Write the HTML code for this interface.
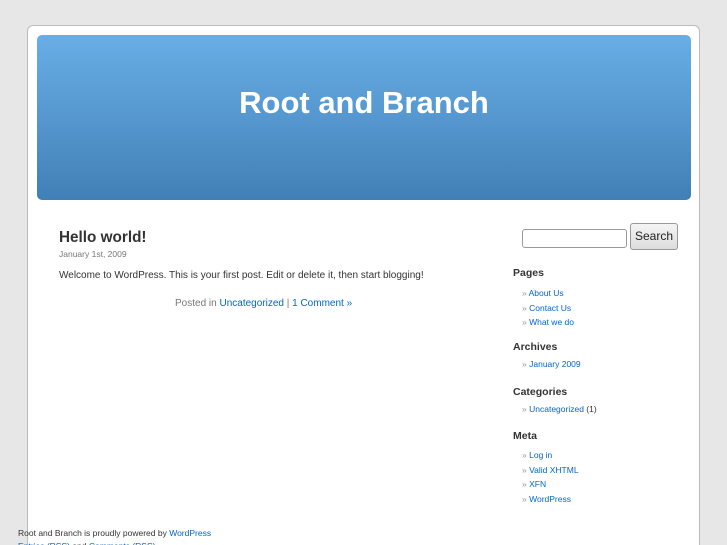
<!DOCTYPE html>
<html><head><meta charset="utf-8"><style>
html,body{margin:0;height:545px;overflow:hidden}
body{background:#e7e7e7;font-family:"Liberation Sans",sans-serif;width:727px;position:relative}
#page{position:absolute;left:27px;top:25px;width:671px;height:540px;background:#fff;border:1px solid #bbb;border-radius:6px}
#hdr{position:absolute;left:37px;top:35px;width:654px;height:165px;border-radius:5px;background:linear-gradient(#69aee7,#4180b6)}
#hdr h1{margin:0;position:absolute;top:50px;width:100%;text-align:center;color:#fff;font-size:31px;font-weight:bold}
a{color:#06c;text-decoration:none}
.abs{position:absolute;white-space:nowrap}
.h{font-size:10.5px;font-weight:bold;color:#333}
.li{font-size:8.5px;color:#333}
.li span{color:#999}
</style></head><body>
<div id="page"></div>
<div id="hdr"><h1>Root and Branch</h1></div>
<div class="abs" style="left:59px;top:229px;font-size:15.3px;font-weight:bold;color:#333">Hello world!</div>
<div class="abs" style="left:59px;top:249px;font-size:8.5px;color:#777">January 1st, 2009</div>
<div class="abs" style="left:59px;top:270px;font-size:10px;color:#333">Welcome to WordPress. This is your first post. Edit or delete it, then start blogging!</div>
<div class="abs" style="left:175px;top:298px;font-size:10px;color:#777">Posted in <a>Uncategorized</a> | <a>1 Comment »</a></div>
<div class="abs" style="left:522px;top:229px;width:103px;height:17px;border:1px solid #999;border-radius:3px;background:#fff"></div>
<div class="abs" style="left:630px;top:223px;width:46px;height:25px;border:1px solid #999;border-radius:3px;background:linear-gradient(#f4f4f4,#ddd);font-size:12px;color:#222;text-align:center;line-height:25px">Search</div>
<div class="abs h" style="left:513px;top:267px">Pages</div>
<div class="abs li" style="left:522px;top:286px;line-height:14.7px"><span>»</span> <a>About Us</a><br><span>»</span> <a>Contact Us</a><br><span>»</span> <a>What we do</a></div>
<div class="abs h" style="left:513px;top:341px">Archives</div>
<div class="abs li" style="left:522px;top:359px"><span>»</span> <a>January 2009</a></div>
<div class="abs h" style="left:513px;top:386px">Categories</div>
<div class="abs li" style="left:522px;top:404px"><span>»</span> <a>Uncategorized</a> (1)</div>
<div class="abs h" style="left:513px;top:430px">Meta</div>
<div class="abs li" style="left:522px;top:448px;line-height:14.7px"><span>»</span> <a>Log in</a><br><span>»</span> <a>Valid XHTML</a><br><span>»</span> <a>XFN</a><br><span>»</span> <a>WordPress</a></div>
<div class="abs" style="left:18px;top:527px;font-size:8.5px;color:#333;line-height:13px">Root and Branch is proudly powered by <a>WordPress</a><br><a>Entries (RSS)</a> and <a>Comments (RSS)</a>.</div>
</body></html>
